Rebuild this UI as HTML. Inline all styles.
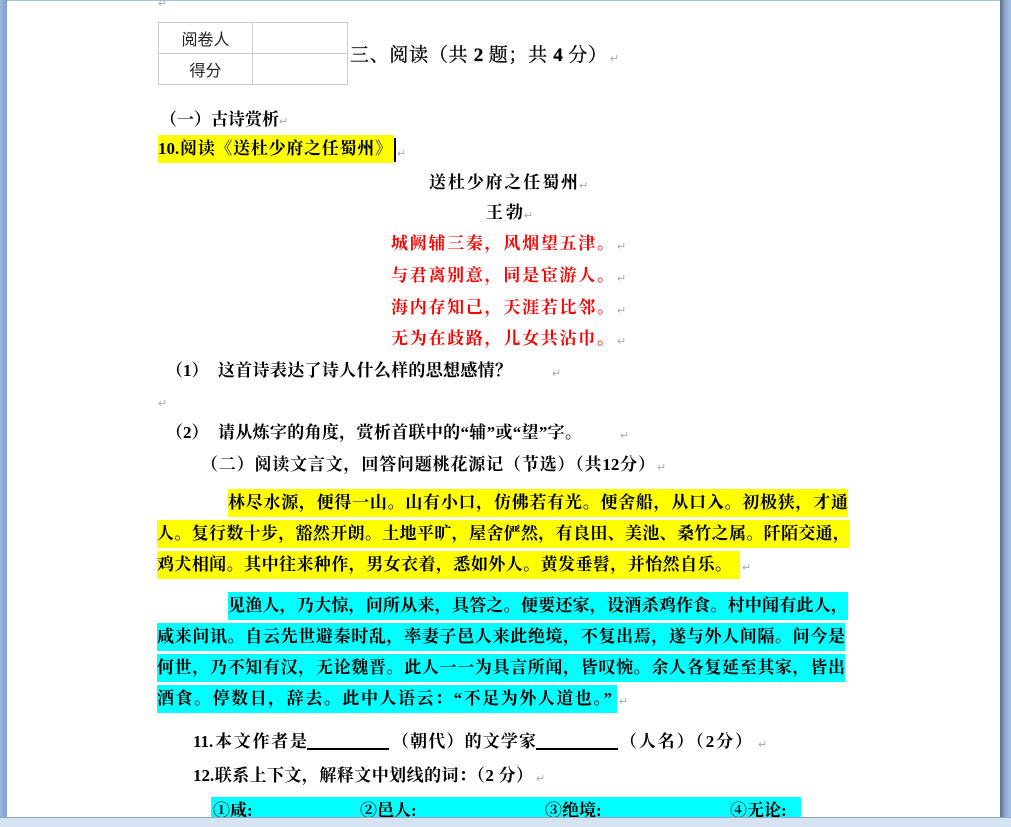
<!DOCTYPE html>
<html><head><meta charset="utf-8"><style>
html,body{margin:0;padding:0;}
body{width:1011px;height:826px;position:relative;overflow:hidden;background:#fff;font-family:"Liberation Serif","Noto Serif CJK SC",serif;color:#000;}
.a{position:absolute;white-space:nowrap;font-size:17px;font-weight:bold;line-height:28px;}
.j{text-align:justify;text-align-last:justify;}
.r{color:#ff0000;}
.y{background:#ffff00;}
.c{background:#00ffff;}
.m{color:#aaa;font-size:11px;font-weight:normal;}
</style></head><body>
<div style="position:absolute;left:0;top:0;width:7px;height:817px;background:linear-gradient(90deg,#9bb7dc,#7f9fcf);"></div>
<div style="position:absolute;left:7px;top:0;width:993px;height:1px;background:#9ec0ea;"></div>
<div style="position:absolute;left:1000px;top:0;width:11px;height:817px;background:linear-gradient(90deg,#5e6f86,#8fa9cf 50%,#a9c3e8);"></div>
<div style="position:absolute;left:0;top:817px;width:1011px;height:9px;background:#d6e3f3;border-top:1px solid #8ea6c8;"></div>

<span class="a m" style="left:158px;top:-10px;">↵</span>
<table style="position:absolute;left:158px;top:22px;border-collapse:collapse;font-family:'Liberation Sans','Noto Sans CJK SC',sans-serif;font-size:16px;color:#222;">
<tr><td style="width:93px;height:30px;border:1px solid #ccc;text-align:center;padding:0;">阅卷人</td><td style="width:94px;border:1px solid #ccc;padding:0;"></td></tr>
<tr><td style="height:30px;border:1px solid #ccc;text-align:center;padding:0;">得分</td><td style="border:1px solid #ccc;padding:0;"></td></tr>
</table>
<div class="a j" style="left:350px;top:42px;width:257px;font-size:19px;font-weight:normal;-webkit-text-stroke:0.3px #000;">三、阅读（共 <b>2</b> 题；共 <b>4</b> 分）</div><span class="a m" style="left:610px;top:45px;">↵</span>

<div class="a" style="left:160px;top:106px;">（一）古诗赏析<span class="m">↵</span></div>
<div class="a y" style="left:158px;top:135px;width:236px;"><div class="j" style="width:234px;">10.阅读《送杜少府之任蜀州》</div></div>
<div style="position:absolute;left:394px;top:138px;width:2px;height:24px;background:#000;"></div>
<span class="a m" style="left:397px;top:140px;">↵</span>

<div class="a j" style="left:429px;top:169px;width:149px;">送杜少府之任蜀州</div><span class="a m" style="left:579px;top:172px;">↵</span>
<div class="a j" style="left:486px;top:199px;width:37px;">王勃</div><span class="a m" style="left:524px;top:202px;">↵</span>
<div class="a j r" style="left:391px;top:230px;width:223px;">城阙辅三秦，风烟望五津。</div><span class="a m" style="left:617px;top:233px;">↵</span>
<div class="a j r" style="left:391px;top:262px;width:223px;">与君离别意，同是宦游人。</div><span class="a m" style="left:617px;top:265px;">↵</span>
<div class="a j r" style="left:391px;top:294px;width:223px;">海内存知己，天涯若比邻。</div><span class="a m" style="left:617px;top:297px;">↵</span>
<div class="a j r" style="left:391px;top:325px;width:223px;">无为在歧路，儿女共沾巾。</div><span class="a m" style="left:617px;top:328px;">↵</span>

<div class="a" style="left:166px;top:357px;">（1）</div>
<div class="a j" style="left:218px;top:357px;width:294px;">这首诗表达了诗人什么样的思想感情？</div><span class="a m" style="left:552px;top:360px;">↵</span>
<span class="a m" style="left:158px;top:390px;">↵</span>
<div class="a" style="left:166px;top:419px;">（2）</div>
<div class="a j" style="left:218px;top:419px;width:364px;">请从炼字的角度，赏析首联中的“辅”或“望”字。</div><span class="a m" style="left:620px;top:422px;">↵</span>
<div class="a j" style="left:201px;top:451px;width:454px;">（二）阅读文言文，回答问题桃花源记（节选）（共12分）</div><span class="a m" style="left:657px;top:454px;">↵</span>

<div class="a j y" style="left:228px;top:489px;width:620px;">林尽水源，便得一山。山有小口，仿佛若有光。便舍船，从口入。初极狭，才通</div>
<div class="a j y" style="left:157px;top:520px;width:693px;">人。复行数十步，豁然开朗。土地平旷，屋舍俨然，有良田、美池、桑竹之属。阡陌交通，</div>
<div class="a y" style="left:157px;top:551px;width:583px;"><div class="j" style="width:575px;">鸡犬相闻。其中往来种作，男女衣着，悉如外人。黄发垂髫，并怡然自乐。</div></div><span class="a m" style="left:742px;top:554px;">↵</span>

<div class="a j c" style="left:228px;top:592px;width:620px;">见渔人，乃大惊，问所从来，具答之。便要还家，设酒杀鸡作食。村中闻有此人，</div>
<div class="a j c" style="left:157px;top:623px;width:688px;">咸来问讯。自云先世避秦时乱，率妻子邑人来此绝境，不复出焉，遂与外人间隔。问今是</div>
<div class="a j c" style="left:157px;top:654px;width:688px;">何世，乃不知有汉，无论魏晋。此人一一为具言所闻，皆叹惋。余人各复延至其家，皆出</div>
<div class="a c" style="left:157px;top:685px;width:460px;"><div class="j" style="width:455px;">酒食。停数日，辞去。此中人语云：“不足为外人道也。”</div></div><span class="a m" style="left:619px;top:688px;">↵</span>

<div class="a j" style="left:193px;top:728px;width:114px;">11.本文作者是</div>
<div style="position:absolute;left:307px;top:748px;width:82px;height:2px;background:#000;"></div>
<div class="a j" style="left:392px;top:728px;width:144px;">（朝代）的文学家</div>
<div style="position:absolute;left:536px;top:748px;width:82px;height:2px;background:#000;"></div>
<div class="a j" style="left:620px;top:728px;width:132px;">（人名）（2分）</div><span class="a m" style="left:758px;top:731px;">↵</span>
<div class="a j" style="left:193px;top:762px;width:340px;">12.联系上下文，解释文中划线的词：（2 分）</div><span class="a m" style="left:536px;top:765px;">↵</span>

<div class="c" style="position:absolute;left:211px;top:797px;width:590px;height:20px;overflow:hidden;">
<div class="a" style="left:2px;top:0px;">①咸:</div>
<div class="a" style="left:149px;top:0px;">②邑人:</div>
<div class="a" style="left:334px;top:0px;">③绝境:</div>
<div class="a" style="left:519px;top:0px;">④无论:</div>
</div>
</body></html>
